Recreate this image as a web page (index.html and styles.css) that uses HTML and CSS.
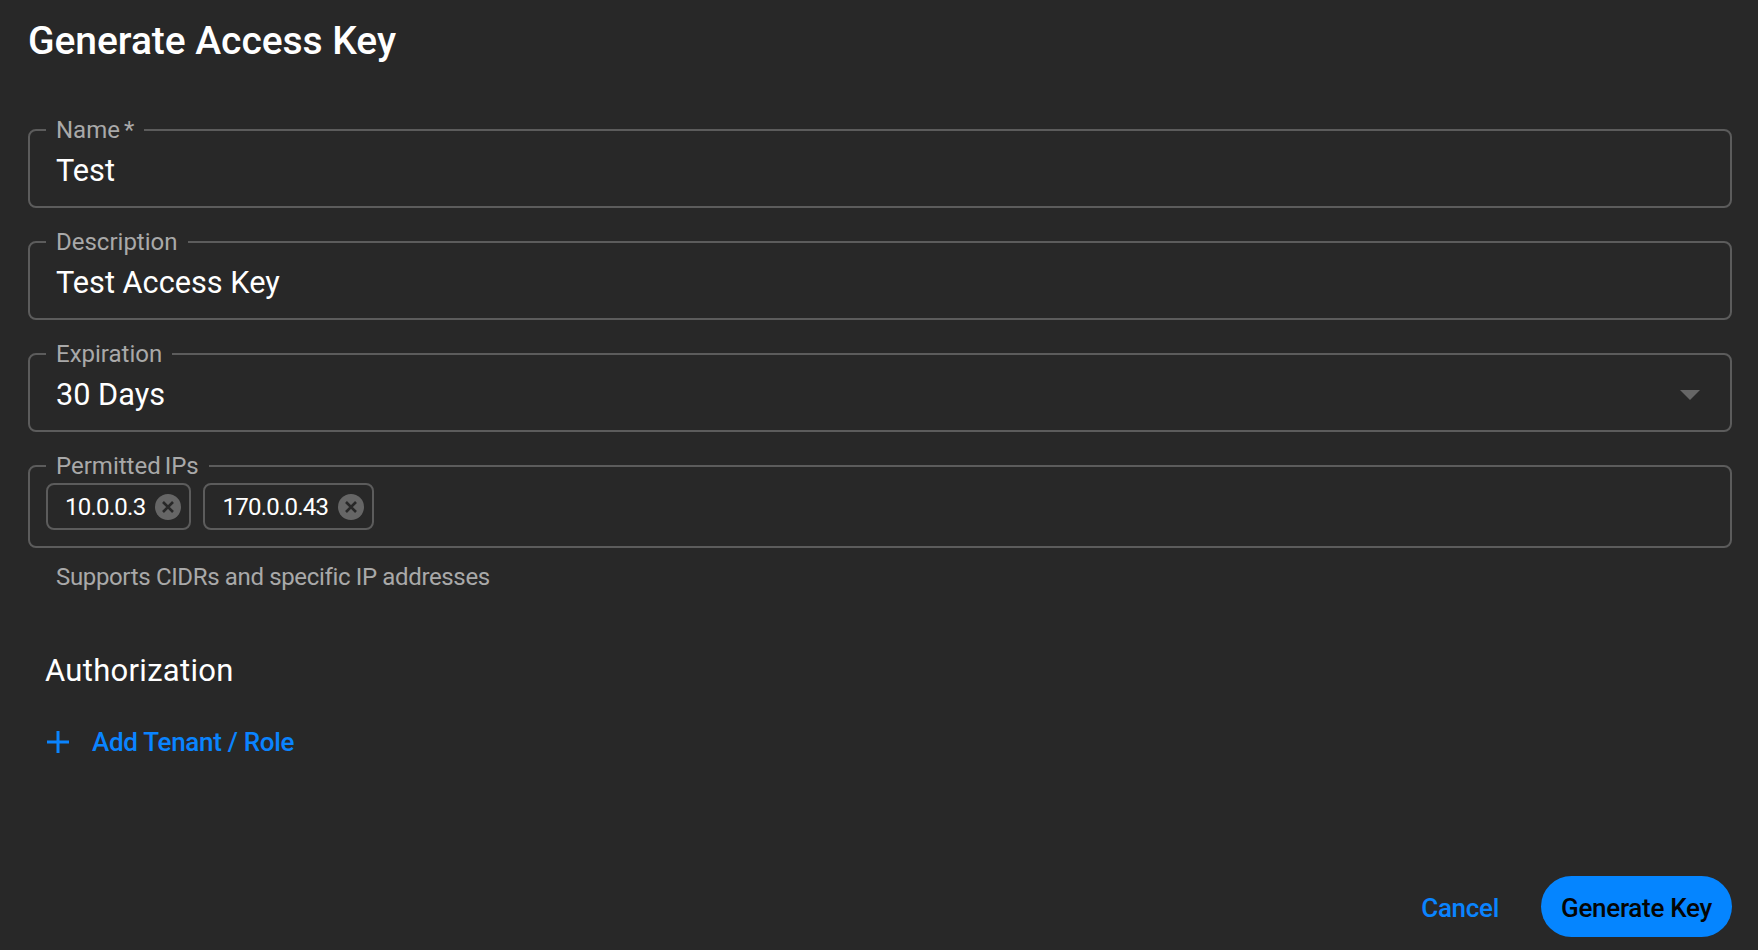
FILE: index.html
```html
<!DOCTYPE html>
<html lang="en">
  <head>
    <meta charset="UTF-8" />
    <title>Generate Access Key</title>
    <link rel="stylesheet" href="styles.css">
  </head>
  <body>
    <div class="dialog">
      <h1 class="dialog-title">Generate Access Key</h1>

      <form class="form">
        <fieldset class="field">
          <legend class="field-label">Name *</legend>
          <div class="field-value">Test</div>
        </fieldset>

        <fieldset class="field">
          <legend class="field-label">Description</legend>
          <div class="field-value">Test Access Key</div>
        </fieldset>

        <fieldset class="field">
          <legend class="field-label">Expiration</legend>
          <div class="field-value select-value">
            <span>30 Days</span>
            <span class="select-arrow"></span>
          </div>
        </fieldset>

        <fieldset class="field chips-field">
          <legend class="field-label">Permitted IPs</legend>
          <div class="chips">
            <div class="chip">
              <span>10.0.0.3</span>
              <svg class="chip-remove" viewBox="0 0 26 26">
                <circle cx="13" cy="13" r="13" fill="#666666" />
                <path d="M8 8 L18 18 M18 8 L8 18" stroke="#282828" stroke-width="2.6" fill="none" />
              </svg>
            </div>
            <div class="chip">
              <span>170.0.0.43</span>
              <svg class="chip-remove" viewBox="0 0 26 26">
                <circle cx="13" cy="13" r="13" fill="#666666" />
                <path d="M8 8 L18 18 M18 8 L8 18" stroke="#282828" stroke-width="2.6" fill="none" />
              </svg>
            </div>
          </div>
        </fieldset>
        <p class="help-text">Supports CIDRs and specific IP addresses</p>
      </form>

      <h2 class="section-title">Authorization</h2>
      <div class="add-row">
        <svg class="add-icon" viewBox="0 0 22 22">
          <path d="M11 0 V22 M0 11 H22" stroke="#0a84ff" stroke-width="3" fill="none" />
        </svg>
        <span>Add Tenant / Role</span>
      </div>

      <div class="actions">
        <button type="button" class="button-text">Cancel</button>
        <button type="button" class="button-primary">Generate Key</button>
      </div>
    </div>
  </body>
</html>
```

FILE: styles.css
```css
* {
  box-sizing: border-box;
}
html,
body {
  height: 100%;
}
body {
  margin: 0;
  background-color: #282828;
  color: #ffffff;
  font-family: Roboto, "Liberation Sans", sans-serif;
}
.dialog {
  display: flex;
  flex-direction: column;
  height: 950px;
  padding: 18px 26px 13px 28px;
}
.dialog-title {
  margin: 0;
  font-size: 39px;
  font-weight: 500;
  line-height: 46px;
  letter-spacing: -0.05px;
}
.form {
  display: flex;
  flex-direction: column;
  margin-top: 53px;
}
.field {
  min-width: 0;
  height: 91px;
  margin: 0 0 21px;
  padding: 0 26px;
  border: 2px solid #5c5c5c;
  border-radius: 8px;
}
.field-label {
  margin-left: -10px;
  padding: 0 10px;
  color: #a9a9a9;
  font-size: 24px;
  line-height: 26px;
  word-spacing: -2px;
}
.field-value {
  height: 56px;
  font-size: 30.7px;
  line-height: 56px;
}
.select-value {
  display: flex;
  align-items: center;
  justify-content: space-between;
  padding-right: 4px;
}
.select-arrow {
  width: 0;
  height: 0;
  border-top: 10px solid #666666;
  border-left: 10px solid transparent;
  border-right: 10px solid transparent;
}
.chips-field {
  height: 95px;
  margin-bottom: 0;
  padding: 0 16px;
}
.chips-field .field-label {
  margin-left: 0;
}
.chips {
  display: flex;
  gap: 12px;
  padding-top: 4px;
}
.chip {
  display: flex;
  align-items: center;
  gap: 10px;
  height: 47px;
  padding: 0 8px 0 17px;
  border: 2px solid #5c5c5c;
  border-radius: 8px;
  font-size: 24px;
  letter-spacing: -0.75px;
}
.chip-remove {
  width: 26px;
  height: 26px;
}
.help-text {
  margin: 14px 0 0 28px;
  color: #a9a9a9;
  font-size: 24px;
  line-height: 30px;
  letter-spacing: -0.35px;
}
.section-title {
  margin: 59px 0 0 17px;
  font-size: 31px;
  font-weight: 400;
  line-height: 40px;
  letter-spacing: 0.3px;
}
.add-row {
  display: flex;
  align-items: center;
  gap: 23px;
  margin: 35px 0 0 19px;
  color: #0a84ff;
  font-size: 26px;
  font-weight: 500;
  line-height: 32px;
  letter-spacing: -0.3px;
}
.add-icon {
  width: 22px;
  height: 22px;
}
.actions {
  display: flex;
  align-items: center;
  justify-content: flex-end;
  gap: 42px;
  margin-top: auto;
}
.actions button {
  border: none;
  font-family: inherit;
  font-size: 26px;
  font-weight: 500;
  letter-spacing: -0.3px;
  cursor: pointer;
}
.button-text {
  padding: 2px 0 0;
  background: none;
  color: #0a84ff;
}
.button-primary {
  width: 191px;
  height: 61px;
  padding: 2px 0 0;
  border-radius: 31px;
  background-color: #0585ff;
  color: #050505;
}
```
